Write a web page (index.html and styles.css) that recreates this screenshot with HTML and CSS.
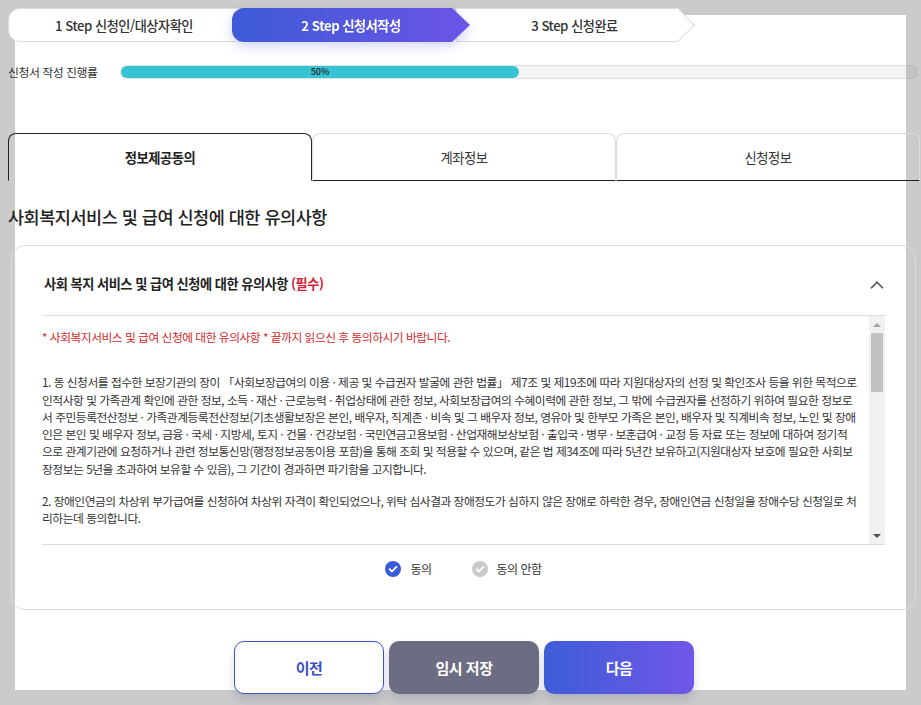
FILE: index.html
```html
<!DOCTYPE html>
<html lang="ko">
<head>
    <meta charset="UTF-8">
    <meta name="viewport" content="width=device-width, initial-scale=1.0">
    <title>신청서작성</title>
    <link rel="stylesheet" href="styles.css">
</head>
<body>
    <div class="panel">
        <div class="page">
            <ol class="steps">
                <li class="step first">1 Step 신청인/대상자확인</li>
                <li class="step on">2 Step 신청서작성</li>
                <li class="step last">3 Step 신청완료</li>
            </ol>

            <div class="progress">
                <span class="progress-label">신청서 작성 진행률</span>
                <div class="bar"><div class="fill" style="width:50%">50%</div></div>
            </div>

            <div class="tabs">
                <div class="tab active">정보제공동의</div>
                <div class="tab">계좌정보</div>
                <div class="tab">신청정보</div>
            </div>

            <h2 class="sec-title">사회복지서비스 및 급여 신청에 대한 유의사항</h2>

            <div class="card">
                <div class="card-head">
                    <h3>사회 복지 서비스 및 급여 신청에 대한 유의사항 <em>(필수)</em></h3>
                    <svg class="fold" width="14" height="8" viewBox="0 0 14 8"><polyline points="1,7.2 7,1.2 13,7.2" fill="none" stroke="#555" stroke-width="1.6"/></svg>
                </div>
                <div class="terms">
                    <div class="terms-text">
                        <p class="notice">* 사회복지서비스 및 급여 신청에 대한 유의사항 * 끝까지 읽으신 후 동의하시기 바랍니다.</p>
                        <p>1. 동 신청서를 접수한 보장기관의 장이 「사회보장급여의 이용 · 제공 및 수급권자 발굴에 관한 법률」 제7조 및 제19조에 따라 지원대상자의 선정 및 확인조사 등을 위한 목적으로 인적사항 및 가족관계 확인에 관한 정보, 소득 · 재산 · 근로능력 · 취업상태에 관한 정보, 사회보장급여의 수혜이력에 관한 정보, 그 밖에 수급권자를 선정하기 위하여 필요한 정보로서 주민등록전산정보 · 가족관계등록전산정보(기초생활보장은 본인, 배우자, 직계존 · 비속 및 그 배우자 정보, 영유아 및 한부모 가족은 본인, 배우자 및 직계비속 정보, 노인 및 장애인은 본인 및 배우자 정보, 금융 · 국세 · 지방세, 토지 · 건물 · 건강보험 · 국민연금고용보험 · 산업재해보상보험 · 출입국 · 병무 · 보훈급여 · 교정 등 자료 또는 정보에 대하여 정기적으로 관계기관에 요청하거나 관련 정보통신망(행정정보공동이용 포함)을 통해 조회 및 적용할 수 있으며, 같은 법 제34조에 따라 5년간 보유하고(지원대상자 보호에 필요한 사회보장정보는 5년을 초과하여 보유할 수 있음), 그 기간이 경과하면 파기함을 고지합니다.</p>
                        <p>2. 장애인연금의 차상위 부가급여를 신청하여 차상위 자격이 확인되었으나, 위탁 심사결과 장애정도가 심하지 않은 장애로 하락한 경우, 장애인연금 신청일을 장애수당 신청일로 처리하는데 동의합니다.</p>
                        <p>3. 신청인은 신청서에 기재한 내용이 사실과 다름없음을 확인하며, 허위 또는 부정한 방법으로 급여를 받은 경우 받은 급여를 반환하여야 하고 관계 법령에 따라 처벌을 받을 수 있음을 확인합니다.</p>
                    </div>
                    <div class="scrollbar">
                        <span class="sb-btn up"></span>
                        <span class="sb-track"><span class="sb-thumb"></span></span>
                        <span class="sb-btn down"></span>
                    </div>
                </div>
                <div class="agree">
                    <label class="radio checked"><svg width="16" height="16" viewBox="0 0 16 16"><circle cx="8" cy="8" r="8" fill="#3a5bd9"/><polyline points="4.6,8.2 7,10.5 11.4,5.8" fill="none" stroke="#fff" stroke-width="1.8" stroke-linecap="round" stroke-linejoin="round"/></svg>동의</label>
                    <label class="radio"><svg width="16" height="16" viewBox="0 0 16 16"><circle cx="8" cy="8" r="8" fill="#cacaca"/><polyline points="4.6,8.2 7,10.5 11.4,5.8" fill="none" stroke="#fff" stroke-width="1.8" stroke-linecap="round" stroke-linejoin="round"/></svg>동의 안함</label>
                </div>
            </div>

            <div class="actions">
                <button class="btn prev">이전</button>
                <button class="btn save">임시 저장</button>
                <button class="btn next">다음</button>
            </div>
        </div>
    </div>
</body>
</html>
```

FILE: styles.css
```css
body { margin: 0; background: #cbcbcb; font-family: "Noto Sans CJK KR", "Noto Sans", sans-serif; color: #333; letter-spacing: -0.03em; overflow: hidden; }
.panel { display: flow-root; margin: 15px; height: 675px; background: #fff; }
.page { margin: -7px -14px 0 -7px; }

/* steps */
.steps { display: flex; list-style: none; margin: 0; padding: 0; height: 34px; }
.step { position: relative; display: flex; align-items: center; justify-content: center; box-sizing: border-box; height: 34px; font-size: 13.2px; font-weight: 500; color: #333; background: #fff; border: 1px solid #ddd; }
.step.first { width: 232px; border-radius: 12px 0 0 12px; }
.step.on { width: 238px; margin-left: -8px; z-index: 2; border: none; color: #fff; font-weight: 700; background: none; filter: drop-shadow(0 4px 6px rgba(70, 80, 220, 0.25)); }
.step.on::before { content: ''; position: absolute; inset: 0; z-index: -1; border-radius: 12px 6px 6px 12px; background: linear-gradient(90deg, #3e5ad6, #6b55e6); clip-path: polygon(0 0, calc(100% - 18px) 0, 100% 50%, calc(100% - 18px) 100%, 0 100%); }
.step.last { width: 222px; margin-left: -14px; border-right: none; padding-left: 14px; }
.step.last::after { content: ''; position: absolute; top: 4px; right: -12px; width: 24px; height: 24px; box-sizing: border-box; background: #fff; border-top: 1px solid #ddd; border-right: 1px solid #ddd; transform: rotate(45deg); }

/* progress */
.progress { display: flex; align-items: center; height: 14px; margin-top: 23px; margin-right: 2px; }
.progress-label { width: 112px; font-size: 11.9px; line-height: 14px; color: #333; }
.bar { flex: 1; height: 14px; box-sizing: border-box; border: 1px solid rgba(0, 0, 0, 0.08); border-radius: 7px; background: rgba(0, 0, 0, 0.04); }
.fill { height: 12px; border-radius: 7px; background: #36c4d5; font-size: 9px; font-weight: 500; line-height: 12px; text-align: center; color: #222; letter-spacing: 0; }

/* tabs */
.tabs { display: flex; margin-top: 54px; height: 48px; }
.tab { flex: 1; display: flex; align-items: center; justify-content: center; border: 1px solid #ddd; border-bottom: 1px solid #222; border-radius: 8px 8px 0 0; font-size: 13.3px; color: #333; }
.tab.active { border-color: #222; border-bottom-color: transparent; font-weight: 700; color: #222; }

.sec-title { margin: 23px 0 0; font-size: 17.5px; font-weight: 500; line-height: 26px; color: #222; }

/* card */
.card { margin: 15px 4px 0 3px; border: 1px solid #ddd; border-radius: 14px; padding: 0 30px; }
.card-head { display: flex; align-items: center; justify-content: space-between; height: 69px; box-sizing: border-box; padding: 28px 1px 21px 2px; }
.card-head h3 { margin: 0; font-size: 13.2px; font-weight: 700; line-height: 20px; color: #222; }
.card-head em { font-style: normal; color: #d0233a; }
.fold { margin-top: 1px; }

.terms { display: flex; height: 230px; box-sizing: border-box; border-top: 1px solid #ddd; border-bottom: 1px solid #ddd; }
.terms-text { flex: 1; overflow: hidden; padding: 12px 12px 0 0; font-size: 11.75px; line-height: 17.3px; color: #333; word-break: break-all; }
.terms-text p { margin: 0 0 15px; }
.terms-text .notice { margin-bottom: 28px; color: #d42a2a; }

/* scrollbar drawn by hand: the text box is scrolled to the top */
.scrollbar { display: flex; flex-direction: column; width: 16px; background: #f1f1f1; }
.sb-btn { display: flex; align-items: center; justify-content: center; height: 17px; }
.sb-btn::before { content: ''; border-left: 4px solid transparent; border-right: 4px solid transparent; }
.sb-btn.up::before { border-bottom: 4px solid #a3a3a3; }
.sb-btn.down::before { border-top: 4px solid #505050; }
.sb-track { flex: 1; }
.sb-thumb { display: block; height: 59px; margin: 0 2px; background: #c1c1c1; }

.agree { display: flex; justify-content: center; align-items: flex-start; gap: 40px; height: 64px; padding-top: 14px; box-sizing: border-box; }
.radio { display: flex; align-items: center; gap: 9px; font-size: 12px; line-height: 20px; color: #333; cursor: pointer; }

/* buttons */
.actions { display: flex; justify-content: center; gap: 5px; margin-top: 31px; }
.btn { width: 150px; height: 53px; border: none; border-radius: 10px; font-family: inherit; font-size: 15px; font-weight: 700; letter-spacing: -0.03em; cursor: pointer; box-shadow: 0 6px 10px rgba(60, 60, 120, 0.18); }
.btn.prev { background: #fff; border: 1px solid #3b55c6; color: #3a4fbf; }
.btn.save { background: #6c6d82; color: #fff; }
.btn.next { background: linear-gradient(90deg, #3d5dd7, #7056e8); color: #fff; }
```
